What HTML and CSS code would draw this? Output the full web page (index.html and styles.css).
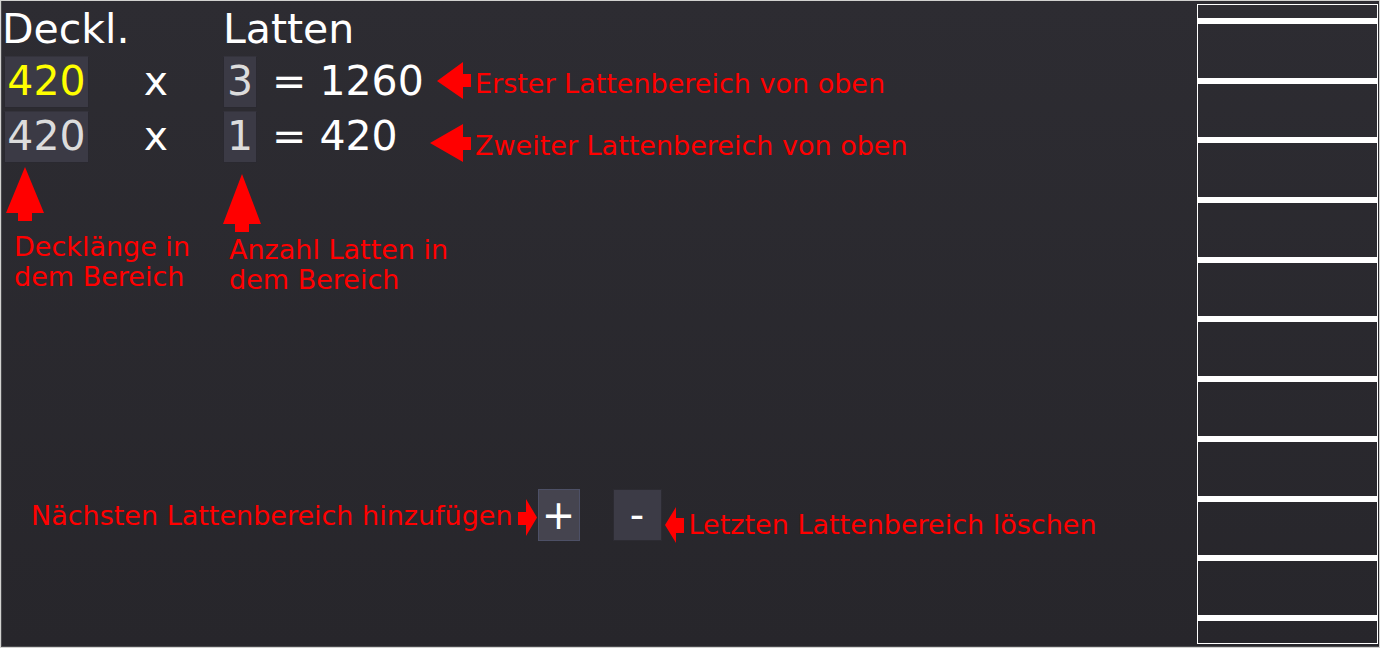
FILE: index.html
```html
<!DOCTYPE html>
<html lang="de">
<head>
<meta charset="utf-8">
<title>Latten</title>
<link rel="stylesheet" href="styles.css">
</head>
<body>
<div class="app">
  <div class="main">
    <div class="table">
      <div class="th th-deckl">Deckl.</div>
      <div class="th th-latten">Latten</div>

      <div class="field field-wide field-active">420</div>
      <div class="op">x</div>
      <div class="field field-narrow">3</div>
      <div class="result">= 1260</div>

      <div class="field field-wide">420</div>
      <div class="op">x</div>
      <div class="field field-narrow">1</div>
      <div class="result">= 420</div>
    </div>

    <div class="actions">
      <span class="note note-add">Nächsten Lattenbereich hinzufügen</span>
      <svg class="arrow-right" width="19" height="37" viewBox="0 0 19 37"><polygon points="0,13 8,13 8,0 19,18.5 8,37 8,26 0,26" fill="#ff0000"/></svg>
      <button class="btn btn-add">+</button>
      <button class="btn btn-del">-</button>
      <svg class="arrow-left" width="19" height="36" viewBox="0 0 19 36"><polygon points="0,18 11,0 11,11 19,11 19,26 11,26 11,36" fill="#ff0000"/></svg>
      <span class="note note-del">Letzten Lattenbereich löschen</span>
    </div>

    <svg class="arrows" width="1200" height="648" viewBox="0 0 1200 648">
      <polygon points="437,81 463,62 463,74 471,74 471,87 463,87 463,99" fill="#ff0000"/>
      <polygon points="430,143 463,124 463,137 471,137 471,150 463,150 463,162" fill="#ff0000"/>
      <polygon points="25,167 44,213 32,213 32,221 18,221 18,213 6,213" fill="#ff0000"/>
      <polygon points="242,174 261,224 249,224 249,232 235,232 235,224 223,224" fill="#ff0000"/>
    </svg>
    <p class="callout callout-first">Erster Lattenbereich von oben</p>
    <p class="callout callout-second">Zweiter Lattenbereich von oben</p>
    <p class="callout callout-length">Decklänge in<br>dem Bereich</p>
    <p class="callout callout-count">Anzahl Latten in<br>dem Bereich</p>
  </div>

  <div class="panel">
    <div class="bar"></div><div class="bar"></div><div class="bar"></div><div class="bar"></div>
    <div class="bar"></div><div class="bar"></div><div class="bar"></div><div class="bar"></div>
    <div class="bar"></div><div class="bar"></div><div class="bar"></div>
  </div>
</div>
</body>
</html>
```

FILE: styles.css
```css
html, body {
  margin: 0;
  padding: 0;
}
body {
  width: 1380px;
  height: 648px;
  overflow: hidden;
  background: #d2d2d0;
  font-family: "DejaVu Sans", "Noto Sans", sans-serif;
}
.app {
  margin: 1px 0 0 1px;
  width: 1378px;
  height: 646px;
  box-sizing: border-box;
  border-left: 1px solid #4a4a4e;
  border-bottom: 1px solid #4a4a4e;
  background: linear-gradient(to bottom, #2d2c32, #27262b);
  display: flex;
  align-items: flex-start;
}
.main {
  flex: 1;
  position: relative;
  padding: 4px 0 0 2px;
  height: 100%;
  box-sizing: border-box;
}
.table {
  display: grid;
  grid-template-columns: 85px 134px 34px auto;
  grid-template-rows: 48px 52px 52px;
  row-gap: 3px;
  font-size: 41px;
  color: #ffffff;
}
.th {
  line-height: 48px;
  white-space: nowrap;
}
.th-deckl {
  grid-column: 1 / 3;
  margin-left: -2px;
}
.th-latten {
  grid-column: 3 / 5;
}
.field {
  box-sizing: border-box;
  height: 52px;
  line-height: 49px;
  text-align: center;
  background: #3b3a45;
  border: 1px solid #2a2930;
  border-top-color: #34333c;
  color: #dcdcdc;
}
.field-active {
  color: #ffff00;
}
.op {
  line-height: 51px;
  text-align: center;
}
.result {
  line-height: 51px;
  padding-left: 15px;
  white-space: pre;
}
.actions {
  margin-top: 326px;
  display: flex;
  align-items: flex-start;
}
.note {
  font-size: 27px;
  line-height: 31px;
  color: #ff0000;
  white-space: nowrap;
}
.note-add {
  margin: 11px 0 0 27px;
}
.arrow-right {
  display: block;
  margin: 10px 0 0 5px;
}
.btn {
  box-sizing: border-box;
  height: 52px;
  padding: 0;
  font-family: "DejaVu Sans", sans-serif;
  font-size: 40px;
  line-height: 50px;
  color: #ffffff;
  text-align: center;
}
.btn-add {
  width: 42px;
  margin-left: 1px;
  background: #45444f;
  border: 1px solid #4d5066;
}
.btn-del {
  width: 49px;
  margin-left: 33px;
  background: #3c3b46;
  border: 1px solid #2c2b32;
}
.arrow-left {
  display: block;
  margin: 18px 0 0 3px;
}
.note-del {
  margin: 20px 0 0 5px;
}
.arrows {
  position: absolute;
  left: -2px;
  top: -1px;
  pointer-events: none;
}
.callout {
  position: absolute;
  margin: 0;
  font-size: 27px;
  line-height: 31px;
  color: #ff0000;
  white-space: nowrap;
}
.callout-first {
  left: 473px;
  top: 67px;
}
.callout-second {
  left: 473px;
  top: 129px;
}
.callout-length {
  left: 12px;
  top: 231px;
  line-height: 30px;
}
.callout-count {
  left: 227px;
  top: 234px;
  line-height: 30px;
}
.panel {
  box-sizing: border-box;
  width: 181px;
  height: 640px;
  margin: 3px 1px 0 0;
  border: 1px solid #ffffff;
  padding-top: 13px;
  display: flex;
  flex-direction: column;
  gap: 53.7px;
}
.bar {
  height: 6px;
  background: #ffffff;
  flex: none;
}
```
